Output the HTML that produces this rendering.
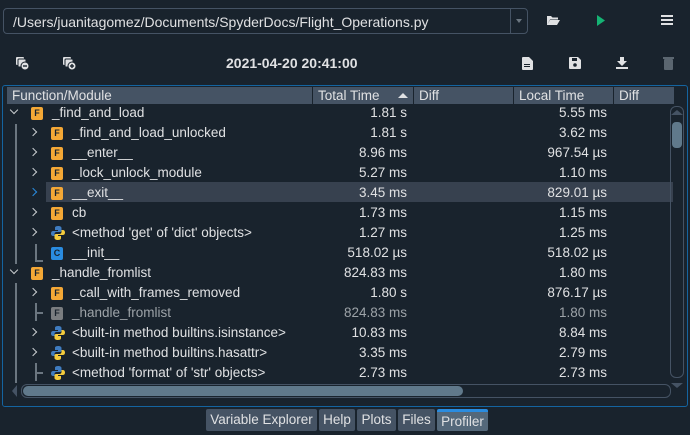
<!DOCTYPE html>
<html><head><style>
*{margin:0;padding:0;box-sizing:border-box}
body{width:690px;height:435px;background:#19232d;font-family:"Liberation Sans",sans-serif;color:#e0e1e3;position:relative;overflow:hidden;font-size:13px}
.abs{position:absolute}
.combo{left:3px;top:8px;width:525px;height:26px;border:1px solid #455364;border-radius:4px;background:#19232d}
.combo span{position:absolute;left:9px;top:5px;font-size:14px;color:#e0e1e3}
.combo .arr{position:absolute;right:0;top:0;width:17px;height:24px;border-left:1px solid #455364}
.panel{left:2px;top:85px;width:686px;height:322px;border:1px solid #1464a0;border-radius:3px;background:#19232d;overflow:hidden}
.hdr{position:absolute;top:1px;height:17px;background:#455364;font-size:13.5px;line-height:17px;padding-left:5px;color:#e0e1e3}
.row{position:absolute;left:0;width:668px;height:20px;font-size:13.5px;line-height:20px}
.row .t{position:absolute;white-space:nowrap}
.num{position:absolute;text-align:right;white-space:nowrap}
.fi{position:absolute;top:4px;width:12px;height:13px;background:#f4a836;border-radius:2px;color:#19232d;font-size:9px;line-height:13px;text-align:center;font-weight:bold}
.ci{background:#2a8ce0}
.gi{background:#7a7d80}
.chev{position:absolute;top:6px;width:6px;height:6px;border-right:1.6px solid #c9cdd0;border-bottom:1.6px solid #c9cdd0}
.r{transform:rotate(-45deg)}
.d{transform:rotate(45deg);top:4px}
.vl{position:absolute;background:#6b7680;width:1.5px}
.tab{position:absolute;top:409px;height:22px;background:#455364;font-size:13.5px;line-height:22px;text-align:center;color:#e0e1e3;border-radius:2px}
</style></head><body>
<div class="abs combo"><span>/Users/juanitagomez/Documents/SpyderDocs/Flight_Operations.py</span><div class="arr"><div style="position:absolute;left:5px;top:10px;border-left:3px solid transparent;border-right:3px solid transparent;border-top:4px solid #6b7680"></div></div></div>
<svg class="abs" style="left:546px;top:14px" width="14" height="12"><path d="M1 2h4l1.5 1.5H12v2H4L1 11z M4 6h10l-3 5H1z" fill="#e0e1e3"/></svg>
<svg class="abs" style="left:596px;top:15px" width="10" height="11"><path d="M1 0L9 5.5 1 11z" fill="#15b374"/></svg>
<svg class="abs" style="left:661px;top:15px" width="12" height="10"><rect y="0" width="12" height="2" fill="#e0e1e3"/><rect y="4" width="12" height="2" fill="#e0e1e3"/><rect y="8" width="12" height="2" fill="#e0e1e3"/></svg>
<svg class="abs" style="left:16px;top:57px" width="14" height="14"><rect x="0" y="0" width="8" height="8" rx="1" fill="#e0e1e3"/><rect x="2" y="2" width="8" height="8" rx="1" fill="#e0e1e3" stroke="#19232d"/><circle cx="9" cy="9" r="4" fill="#e0e1e3" stroke="#19232d"/><rect x="7" y="8.3" width="4" height="1.4" fill="#19232d"/></svg>
<svg class="abs" style="left:63px;top:57px" width="14" height="14"><rect x="0" y="0" width="8" height="8" rx="1" fill="#e0e1e3"/><rect x="2" y="2" width="8" height="8" rx="1" fill="#e0e1e3" stroke="#19232d"/><circle cx="9" cy="9" r="4" fill="#e0e1e3" stroke="#19232d"/><rect x="7" y="8.3" width="4" height="1.4" fill="#19232d"/><rect x="8.3" y="7" width="1.4" height="4" fill="#19232d"/></svg>
<div class="abs" style="left:226px;top:55px;font-size:14px;font-weight:bold;color:#e0e1e3">2021-04-20 20:41:00</div>
<svg class="abs" style="left:522px;top:57px" width="11" height="13"><path d="M0 1a1 1 0 0 1 1-1h6l4 4v8a1 1 0 0 1-1 1H1a1 1 0 0 1-1-1z" fill="#e0e1e3"/><rect x="2" y="7" width="6" height="1" fill="#19232d"/><rect x="2" y="9" width="6" height="1" fill="#19232d"/></svg>
<svg class="abs" style="left:569px;top:57px" width="12" height="12"><path d="M0 1a1 1 0 0 1 1-1h8l3 3v8a1 1 0 0 1-1 1H1a1 1 0 0 1-1-1z" fill="#e0e1e3"/><rect x="3" y="1" width="5" height="3" fill="#19232d"/><circle cx="6" cy="8" r="1.8" fill="#19232d"/></svg>
<svg class="abs" style="left:616px;top:57px" width="12" height="12"><path d="M4 0h4v4h3L6 9 1 4h3z" fill="#e0e1e3"/><rect y="10" width="12" height="2" fill="#e0e1e3"/></svg>
<svg class="abs" style="left:663px;top:56px" width="11" height="14"><rect x="0" y="1" width="11" height="2" fill="#5b6670"/><rect x="1" y="3" width="9" height="11" rx="1" fill="#5b6670"/></svg>

<div class="abs panel">
<div class="hdr" style="left:4px;width:305px">Function/Module</div>
<div class="hdr" style="left:310px;width:100px">Total Time<div style="position:absolute;right:5px;top:6px;border-left:5px solid transparent;border-right:5px solid transparent;border-bottom:5px solid #e0e1e3"></div></div>
<div class="hdr" style="left:411px;width:99px">Diff</div>
<div class="hdr" style="left:511px;width:99px">Local Time</div>
<div class="hdr" style="left:611px;width:60px">Diff</div>
<div class="abs" style="left:43px;top:96px;width:627px;height:20px;background:#37414f"></div>
<div class="vl" style="left:12px;top:38px;height:140px"></div>
<div class="vl" style="left:12px;top:197px;height:100px"></div>
<div class="vl" style="left:32px;top:158px;height:17px"></div>
<div class="vl" style="left:32px;top:174px;width:8px;height:1.5px"></div>
<div class="vl" style="left:32px;top:217px;height:18px"></div><div class="vl" style="left:32px;top:226px;width:8px;height:1.5px"></div>
<div class="vl" style="left:32px;top:277px;height:18px"></div><div class="vl" style="left:32px;top:286px;width:8px;height:1.5px"></div>
<div id="rows"></div>
<div class="abs" style="left:667px;top:20px;width:14px;height:272px;border:1px solid #455364;border-radius:6px"></div>
<div class="abs" style="left:669px;top:36px;width:10px;height:26px;background:#60798b;border-radius:4px"></div>
<div class="abs" style="left:668px;top:24px;border-left:6px solid transparent;border-right:6px solid transparent;border-bottom:5px solid #455364"></div>
<div class="abs" style="left:668px;top:297px;border-left:6px solid transparent;border-right:6px solid transparent;border-top:5px solid #455364"></div>
<div class="abs" style="left:0;top:298px;width:666px;height:22px;background:#19232d"></div>
<div class="abs" style="left:18px;top:298px;width:650px;height:14px;border:1px solid #455364;border-radius:6px"></div>
<div class="abs" style="left:20px;top:300px;width:440px;height:10px;background:#60798b;border-radius:5px"></div>
<div class="abs" style="left:9px;top:299px;border-top:6px solid transparent;border-bottom:6px solid transparent;border-right:5px solid #455364"></div>
</div>

<div class="tab" style="left:206px;width:111px">Variable Explorer</div>
<div class="tab" style="left:319px;width:36px">Help</div>
<div class="tab" style="left:357px;width:39px">Plots</div>
<div class="tab" style="left:398px;width:37px">Files</div>
<div class="tab" style="left:437px;width:51px;background:#54687a;border-top:3px solid #2a8ce0;line-height:20px">Profiler</div>

<script>
const py='<svg style="position:absolute;top:3px" width="14" height="14" viewBox="0 0 14 14"><path d="M7 0C4 0 4 1.5 4 2v2h3v1H2C.5 5 0 6.5 0 7.5S.5 10 2 10h1.5V8c0-1 .8-2 2-2h3.5c1 0 1.5-.7 1.5-1.5V2C10.5 1 9.5 0 7 0z" fill="#3f7cc0"/><path d="M7 14c3 0 3-1.5 3-2v-2H7V9h5c1.5 0 2-1.5 2-2.5S13.5 4 12 4h-1.5v2c0 1-.8 2-2 2H5c-1 0-1.5.7-1.5 1.5V12c0 1 1 2 3.5 2z" fill="#f5cc3c"/></svg>';
const rows=[
[0,'d','F','_find_and_load','1.81 s','5.55 ms'],
[1,'r','F','_find_and_load_unlocked','1.81 s','3.62 ms'],
[1,'r','F','__enter__','8.96 ms','967.54 µs'],
[1,'r','F','_lock_unlock_module','5.27 ms','1.10 ms'],
[1,'rb','F','__exit__','3.45 ms','829.01 µs'],
[1,'r','F','cb','1.73 ms','1.15 ms'],
[1,'r','P',"&lt;method 'get' of 'dict' objects&gt;",'1.27 ms','1.25 ms'],
[1,'','C','__init__','518.02 µs','518.02 µs'],
[0,'d','F','_handle_fromlist','824.83 ms','1.80 ms'],
[1,'r','F','_call_with_frames_removed','1.80 s','876.17 µs'],
[1,'','G','_handle_fromlist','824.83 ms','1.80 ms'],
[1,'r','P','&lt;built-in method builtins.isinstance&gt;','10.83 ms','8.84 ms'],
[1,'r','P','&lt;built-in method builtins.hasattr&gt;','3.35 ms','2.79 ms'],
[1,'','P',"&lt;method 'format' of 'str' objects&gt;",'2.73 ms','2.73 ms'],
[1,'r','P',"&lt;method 'get' of 'dict' objects&gt;",'1.27 ms','1.25 ms']];
let h='';
rows.forEach((r,i)=>{
 const y=17+i*20, x=r[0]*20;
 const gray=r[2]=='G';
 const col=gray?'#9da3a8':'#e0e1e3';
 h+=`<div class="row" style="top:${y}px;color:${col}">`;
 if(r[1]){const dir=r[1][0];const c=r[1]=='rb'?'border-color:#2a8ce0':'';
  h+=`<div class="chev ${dir}" style="left:${dir=='d'?x+8:x+7}px;${c}"></div>`;}
 if(r[2]=='P') h+=`<div style="position:absolute;left:${x+28}px">${py}</div>`;
 else h+=`<div class="fi ${r[2]=='C'?'ci':''} ${gray?'gi':''}" style="left:${x+28}px">${r[2]=='C'?'C':'F'}</div>`;
 h+=`<div class="t" style="left:${x+49}px">${r[3]}</div>`;
 h+=`<div class="num" style="right:${668-404}px">${r[4]}</div><div class="num" style="right:${668-604}px">${r[5]}</div></div>`;
});
document.getElementById('rows').innerHTML=h;
</script>
</body></html>
